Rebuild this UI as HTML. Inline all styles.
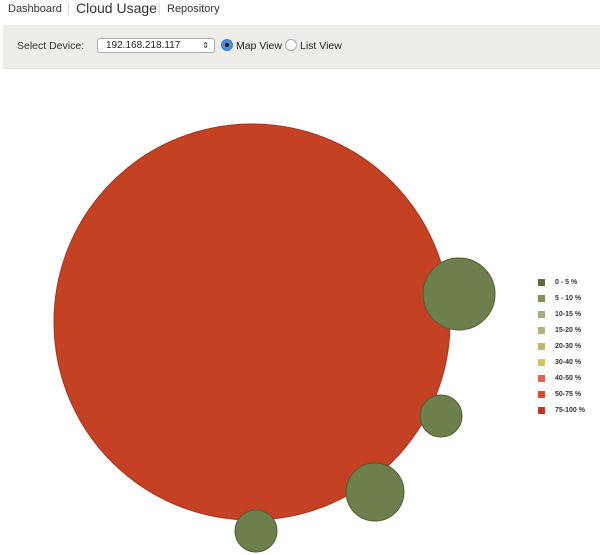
<!DOCTYPE html>
<html><head><style>
body{margin:0;width:600px;height:555px;background:#fff;font-family:"Liberation Sans",sans-serif;position:relative;overflow:hidden}
.nav{position:absolute;top:0;left:8px;font-size:11px;color:#333}
.nav span{position:absolute;white-space:nowrap}
.bar{position:absolute;left:3px;top:25px;width:597px;height:43px;background:#efedea;border-bottom:1px solid #e2e0dc}
.lg div{position:absolute;left:538px;width:7px;height:7px}
.lg span{position:absolute;left:555px;font-size:7px;font-weight:bold;color:#333}
</style></head><body>
<div class="nav">
<span style="left:0;top:3px">Dashboard</span>
<span style="left:60px;top:2px;width:1px;height:13px;background:#ddd"></span>
<span style="left:68px;top:0;font-size:14px">Cloud Usage</span>
<span style="left:151px;top:2px;width:1px;height:13px;background:#ddd"></span>
<span style="left:159px;top:3px">Repository</span>
</div>
<div class="bar">
<span style="position:absolute;left:14px;top:15px;font-size:10.5px;color:#333">Select Device:</span>
<div style="position:absolute;left:94px;top:13px;width:116px;height:13px;border:1px solid #aaa;border-radius:3px;background:#fff;font-size:10px;line-height:13px;color:#222"><span style="margin-left:8px">192.168.218.117</span><span style="position:absolute;right:5px;font-size:8px">&#8661;</span></div>
<div style="position:absolute;left:218px;top:14px;width:10px;height:10px;border-radius:50%;background:#4a90e2;border:1px solid #3a7bd0"><div style="width:4px;height:4px;background:#111;border-radius:50%;margin:3px"></div></div>
<span style="position:absolute;left:233px;top:15px;font-size:10.5px;color:#222">Map View</span>
<div style="position:absolute;left:282px;top:14px;width:10px;height:10px;border-radius:50%;background:#fff;border:1px solid #aaa"></div>
<span style="position:absolute;left:297px;top:15px;font-size:10.5px;color:#222">List View</span>
</div>
<svg style="position:absolute;left:0;top:0" width="600" height="555">
<circle cx="252" cy="322" r="198" fill="#c54124" stroke="#a8321a"/>
<g fill="#6c7f4c" stroke="#4d5f30">
<circle cx="459" cy="294" r="36"/>
<circle cx="441" cy="416" r="21"/>
<circle cx="375" cy="492" r="29"/>
<circle cx="256" cy="531" r="21"/>
</g>
</svg>
<div class="lg">
<div style="top:279px;background:#5e6d40"></div><span style="top:279px">0 - 5 %</span>
<div style="top:295px;background:#7c9354"></div><span style="top:295px">5 - 10 %</span>
<div style="top:311px;background:#9eb080"></div><span style="top:311px">10-15 %</span>
<div style="top:327px;background:#b3b07a"></div><span style="top:327px">15-20 %</span>
<div style="top:343px;background:#c2b86c"></div><span style="top:343px">20-30 %</span>
<div style="top:359px;background:#d2c656"></div><span style="top:359px">30-40 %</span>
<div style="top:375px;background:#e1644a"></div><span style="top:375px">40-50 %</span>
<div style="top:391px;background:#dd4a2e"></div><span style="top:391px">50-75 %</span>
<div style="top:407px;background:#c2321e"></div><span style="top:407px">75-100 %</span>
</div>
</body></html>
